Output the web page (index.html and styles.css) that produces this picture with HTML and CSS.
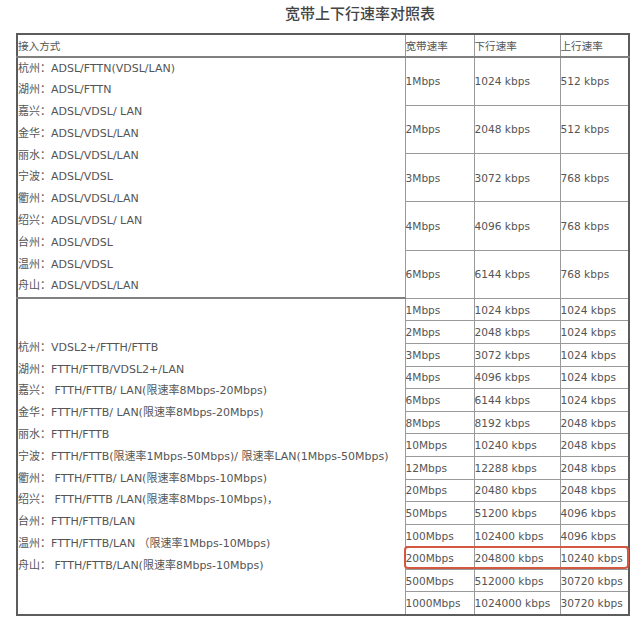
FILE: index.html
```html
<!DOCTYPE html>
<html lang="zh">
<head>
<meta charset="utf-8">
<link rel="stylesheet" href="styles.css">
</head>
<body>
<h1 class="title">宽带上下行速率对照表</h1>
<table class="rates">
  <colgroup>
    <col class="c-way"><col class="c-bw"><col class="c-down"><col class="c-up">
  </colgroup>
  <tr class="head">
    <td>接入方式</td><td>宽带速率</td><td>下行速率</td><td>上行速率</td>
  </tr>
  <tr class="big">
    <td rowspan="5" class="way top">杭州：ADSL/FTTN(VDSL/LAN)<br>湖州：ADSL/FTTN<br>嘉兴：ADSL/VDSL/ LAN<br>金华：ADSL/VDSL/LAN<br>丽水：ADSL/VDSL/LAN<br>宁波：ADSL/VDSL<br>衢州：ADSL/VDSL/LAN<br>绍兴：ADSL/VDSL/ LAN<br>台州：ADSL/VDSL<br>温州：ADSL/VDSL<br>舟山：ADSL/VDSL/LAN</td>
    <td>1Mbps</td><td>1024 kbps</td><td>512 kbps</td>
  </tr>
  <tr class="big"><td>2Mbps</td><td>2048 kbps</td><td>512 kbps</td></tr>
  <tr class="big"><td>3Mbps</td><td>3072 kbps</td><td>768 kbps</td></tr>
  <tr class="big"><td>4Mbps</td><td>4096 kbps</td><td>768 kbps</td></tr>
  <tr class="big"><td>6Mbps</td><td>6144 kbps</td><td>768 kbps</td></tr>
  <tr class="small">
    <td rowspan="14" class="way mid">杭州：VDSL2+/FTTH/FTTB<br>湖州：FTTH/FTTB/VDSL2+/LAN<br>嘉兴： FTTH/FTTB/ LAN(限速率8Mbps-20Mbps)<br>金华：FTTH/FTTB/ LAN(限速率8Mbps-20Mbps)<br>丽水：FTTH/FTTB<br>宁波：FTTH/FTTB(限速率1Mbps-50Mbps)/ 限速率LAN(1Mbps-50Mbps)<br>衢州： FTTH/FTTB/ LAN(限速率8Mbps-10Mbps)<br>绍兴： FTTH/FTTB /LAN(限速率8Mbps-10Mbps)，<br>台州：FTTH/FTTB/LAN<br>温州：FTTH/FTTB/LAN （限速率1Mbps-10Mbps)<br>舟山： FTTH/FTTB/LAN(限速率8Mbps-10Mbps)</td>
    <td>1Mbps</td><td>1024 kbps</td><td>1024 kbps</td>
  </tr>
  <tr class="small"><td>2Mbps</td><td>2048 kbps</td><td>1024 kbps</td></tr>
  <tr class="small"><td>3Mbps</td><td>3072 kbps</td><td>1024 kbps</td></tr>
  <tr class="small"><td>4Mbps</td><td>4096 kbps</td><td>1024 kbps</td></tr>
  <tr class="small"><td>6Mbps</td><td>6144 kbps</td><td>1024 kbps</td></tr>
  <tr class="small"><td>8Mbps</td><td>8192 kbps</td><td>2048 kbps</td></tr>
  <tr class="small"><td>10Mbps</td><td>10240 kbps</td><td>2048 kbps</td></tr>
  <tr class="small"><td>12Mbps</td><td>12288 kbps</td><td>2048 kbps</td></tr>
  <tr class="small"><td>20Mbps</td><td>20480 kbps</td><td>2048 kbps</td></tr>
  <tr class="small"><td>50Mbps</td><td>51200 kbps</td><td>4096 kbps</td></tr>
  <tr class="small"><td>100Mbps</td><td>102400 kbps</td><td>4096 kbps</td></tr>
  <tr class="small"><td class="marked">200Mbps<span class="highlight"></span></td><td>204800 kbps</td><td>10240 kbps</td></tr>
  <tr class="small"><td>500Mbps</td><td>512000 kbps</td><td>30720 kbps</td></tr>
  <tr class="small"><td>1000Mbps</td><td>1024000 kbps</td><td>30720 kbps</td></tr>
</table>
</body>
</html>
```
FILE: styles.css
```css
html, body {
  margin: 0;
  padding: 0;
  background: #ffffff;
}

body {
  width: 640px;
  font-family: "DejaVu Sans", "Noto Sans CJK SC", sans-serif;
  color: #555555;
}

.title {
  margin: 0;
  height: 33px;
  padding-left: 285px;
  font-family: "Noto Sans CJK SC", sans-serif;
  font-size: 15px;
  font-weight: 500;
  line-height: 25px;
  color: #444444;
}

.rates {
  margin-left: 16px;
  width: 612px;
  table-layout: fixed;
  border-collapse: collapse;
  border: 2px solid #5c5c5c;
  font-size: 10.6px;
}

.c-way { width: 388px; }
.c-bw { width: 69px; }
.c-down { width: 86px; }
.c-up { width: 69px; }

.rates td {
  border: 1px solid #9a9a9a;
  padding: 0;
  white-space: nowrap;
  vertical-align: middle;
  font-family: "DejaVu Sans", "Noto Sans CJK SC", sans-serif;
}

.head td {
  height: 20.5px;
  border-bottom: 2px solid #808080;
}

.big td {
  height: 47.2px;
}

.small td {
  height: 21.6px;
}

.rates td.way {
  font-size: 11px;
  line-height: 21.8px;
}

.way.top {
  vertical-align: top;
  border-bottom: 2px solid #808080;
}

.way.mid {
  vertical-align: middle;
}

.marked {
  position: relative;
}

.highlight {
  position: absolute;
  left: -2px;
  top: -1px;
  width: 221px;
  height: 19px;
  border: 2px solid #d4583f;
  border-radius: 4px;
  pointer-events: none;
}
```
